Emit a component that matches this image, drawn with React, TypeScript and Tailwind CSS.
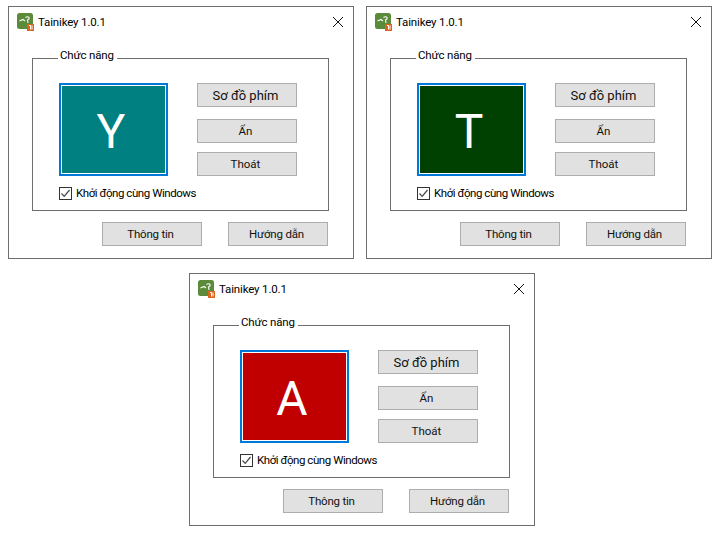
const FONT = "font-['Roboto','Noto_Sans',sans-serif]";

function AppIcon() {
  return (
    <svg width="17" height="18" viewBox="0 0 17 18" className="shrink-0">
      <rect x="0" y="0" width="16" height="16" rx="2.5" fill="#5a8a3a" />
      <path d="M2.5 8 L6 6.5 L8 8 M8.5 4.5 Q10.5 3 12 4.5 Q12.5 6.5 10.5 7 L11 10" stroke="#fff" strokeWidth="1.1" fill="none" />
      <rect x="10" y="11" width="7" height="7" fill="#d9661f" />
      <path d="M12 12.5 H13.5 V16.5 M15 12.5 V16.5" stroke="#fff" strokeWidth="1" fill="none" />
    </svg>
  );
}

function Btn({ label, className }: { label: string; className: string }) {
  return (
    <div className={`w-[100px] h-6 flex items-center justify-center pr-[3px] pt-[2px] bg-[#e1e1e1] border border-[#adadad] text-[#111] ${className}`}>
      {label}
    </div>
  );
}

function Win({ letter, color }: { letter: string; color: string }) {
  return (
    <div className="w-[346px] h-[253px] border border-[#6e6e6e] bg-white flex flex-col">
      <div className="flex items-center h-[30px] pl-2 pr-[9px]">
        <AppIcon />
        <span className="ml-1 pt-[2px] text-[11.5px] tracking-[-0.15px] text-black">Tainikey 1.0.1</span>
        <svg width="12" height="12" viewBox="0 0 12 12" className="ml-auto">
          <path d="M1 1 L11 11 M11 1 L1 11" stroke="#111" strokeWidth="1" fill="none" />
        </svg>
      </div>
      <div className="relative ml-[23px] mt-[21px] w-[297px] h-[153px] border border-[#6e6e6e] pl-[26px] pt-6">
        <span className="absolute -top-[13px] left-[25px] w-[59px] bg-white pl-[2px] text-[11.5px] tracking-[-0.15px] leading-[18px] text-black">Chức năng</span>
        <div className="flex">
          <div className="w-[109px] h-[93px] border-2 border-[#0078d7] p-px bg-white">
            <div className={`w-full h-full flex items-center justify-center text-white text-[48px] pr-[5px] pt-1 ${color}`}>{letter}</div>
          </div>
          <div className="ml-[29px] flex flex-col">
            <Btn label="Sơ đồ phím" className="text-[13px]" />
            <Btn label="Ẩn" className="mt-3 text-[11.5px]" />
            <Btn label="Thoát" className="mt-[9px] text-[11.5px]" />
          </div>
        </div>
        <div className="flex items-center mt-[9px] h-4 text-black">
          <div className="w-[13px] h-[13px] border border-[#333] flex items-center justify-center">
            <svg width="11" height="11" viewBox="0 0 11 11">
              <path d="M1.5 5.5 L4.2 8.3 L9.5 2" stroke="#444" strokeWidth="1.2" fill="none" />
            </svg>
          </div>
          <span className="ml-[4px] pt-[2px] text-[11.5px] tracking-[-0.45px]">Khởi động cùng Windows</span>
        </div>
      </div>
      <div className="flex ml-[93px] mt-[11px] gap-[26px] text-[11.5px] tracking-[-0.2px]">
        <Btn label="Thông tin" className="" />
        <Btn label="Hướng dẫn" className="" />
      </div>
    </div>
  );
}

export default function App() {
  return (
    <div className={`w-[719px] h-[533px] bg-white pl-2 pt-[6px] flex flex-col ${FONT}`}>
      <div className="flex gap-3">
        <Win letter="Y" color="bg-[#008080]" />
        <Win letter="T" color="bg-[#004000]" />
      </div>
      <div className="ml-[181px] mt-[14px]">
        <Win letter="A" color="bg-[#c00000]" />
      </div>
    </div>
  );
}
